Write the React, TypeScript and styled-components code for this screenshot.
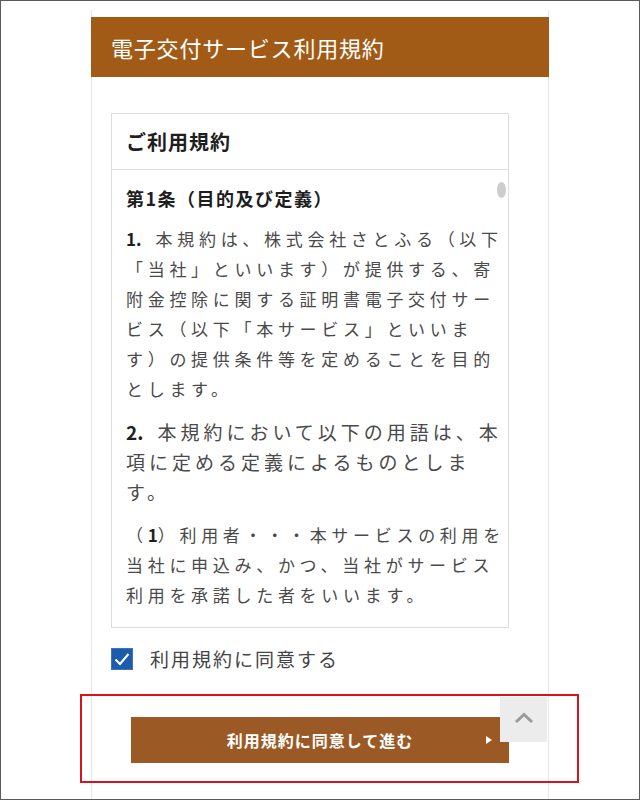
import React, { useState } from 'react'
import styled, { createGlobalStyle } from 'styled-components'

const GlobalStyle = createGlobalStyle`
    * { box-sizing: border-box; }
    body {
        margin: 0;
        background: #ffffff;
        font-family: "Noto Sans CJK JP", "Noto Sans", sans-serif;
    }
`

const Frame = styled.div`
    position: relative;
    width: 640px;
    height: 800px;
    border: 1px solid #5a5a5a;
    background: #ffffff;
    overflow: hidden;
    display: flex;
    flex-direction: column;
`

const Panel = styled.section`
    width: 458px;
    margin: 9px auto 0;
    padding-top: 7px;
    flex: 1;
    border-left: 1px solid #e6e6e6;
    border-right: 1px solid #e6e6e6;
`

const Header = styled.h1`
    margin: 0 -1px;
    height: 60px;
    display: flex;
    align-items: center;
    padding-left: 20px;
    background: #a15b17;
    color: #ffffff;
    font-size: 22px;
    font-weight: 400;
    letter-spacing: 0.8px;
`

const Body = styled.div`
    padding: 36px 0 0 19px;
`

const TermsBox = styled.div`
    width: 398px;
    border: 1px solid #dcdcdc;
    background: #ffffff;
`

const TermsTitle = styled.h2`
    margin: 0;
    height: 56px;
    display: flex;
    align-items: center;
    padding-left: 14px;
    border-bottom: 1px solid #dcdcdc;
    font-size: 20px;
    font-weight: 700;
    letter-spacing: 1px;
    color: #1e1e1e;
`

const ScrollArea = styled.div`
    position: relative;
    height: 457px;
    overflow: hidden;
    padding: 13px 0 0 14px;
`

const Content = styled.div`
    width: 382px;
`

const Thumb = styled.div`
    position: absolute;
    top: 12px;
    right: 2px;
    width: 9px;
    height: 16px;
    border-radius: 50%;
    background: #cdcdcd;
`

const Article = styled.h3`
    margin: 0 0 11px;
    font-size: 18px;
    font-weight: 700;
    line-height: 30px;
    letter-spacing: 1.5px;
    color: #1e1e1e;
`

interface ParaProps {
    readonly large?: boolean;
}

const Para = styled.p<ParaProps>`
    margin: 0 0 13px;
    font-size: ${props => props.large ? '19px' : '17px'};
    letter-spacing: ${props => props.large ? '4px' : '4.7px'};
    line-height: 30px;
    color: #4a4a4a;
    line-break: strict;
`

const Num = styled.b`
    margin-right: 14px;
    letter-spacing: 0;
    font-weight: 700;
    color: #1e1e1e;
`

const InlineNum = styled.b`
    letter-spacing: 0;
    font-weight: 700;
    color: #1e1e1e;
`

const AgreeRow = styled.label`
    display: flex;
    align-items: center;
    gap: 17px;
    margin-top: 17px;
    cursor: pointer;
`

const CheckBox = styled.span<{ checked: boolean }>`
    width: 22px;
    height: 22px;
    display: grid;
    place-items: center;
    background: ${props => props.checked ? '#1d5cad' : '#ffffff'};
    border: 1px solid ${props => props.checked ? '#3d74bb' : '#999999'};
`

const AgreeText = styled.span`
    font-size: 19px;
    letter-spacing: 2px;
    color: #444444;
`

const ButtonArea = styled.div`
    display: flex;
    justify-content: center;
    margin: 45px 0 0 -19px;
`

const NextButton = styled.button`
    position: relative;
    width: 378px;
    height: 46px;
    border: none;
    background: #9b5a25;
    color: #ffffff;
    font-family: inherit;
    font-size: 16px;
    font-weight: 700;
    letter-spacing: 1px;
    cursor: pointer;

    &::after {
        content: "";
        position: absolute;
        right: 17px;
        top: 50%;
        margin-top: -4px;
        border-left: 6px solid #ffffff;
        border-top: 4px solid transparent;
        border-bottom: 4px solid transparent;
    }
`

const PageTop = styled.button`
    position: absolute;
    left: 499px;
    top: 696px;
    width: 47px;
    height: 45px;
    border: none;
    background: #ececec;
    display: grid;
    place-items: center;
    padding: 0 0 4px;
`

const Highlight = styled.div`
    position: absolute;
    left: 79px;
    top: 693px;
    width: 499px;
    height: 89px;
    border: 2px solid #d8141b;
    pointer-events: none;
`

const App = () => {
    const [agreed, setAgreed] = useState(true)

    return (
        <>
            <GlobalStyle />
            <Frame>
                <Panel>
                    <Header>電子交付サービス利用規約</Header>
                    <Body>
                        <TermsBox>
                            <TermsTitle>ご利用規約</TermsTitle>
                            <ScrollArea>
                                <Content>
                                    <Article>第1条（目的及び定義）</Article>
                                    <Para>
                                        <Num>1.</Num>本規約は、株式会社さとふる（以下「当社」といいます）が提供する、寄附金控除に関する証明書電子交付サービス（以下「本サービス」といいます）の提供条件等を定めることを目的とします。
                                    </Para>
                                    <Para large>
                                        <Num>2.</Num>本規約において以下の用語は、本項に定める定義によるものとします。
                                    </Para>
                                    <Para>
                                        （<InlineNum>1</InlineNum>）利用者・・・本サービスの利用を当社に申込み、かつ、当社がサービス利用を承諾した者をいいます。
                                    </Para>
                                </Content>
                                <Thumb />
                            </ScrollArea>
                        </TermsBox>
                        <AgreeRow onClick={() => setAgreed(a => !a)}>
                            <CheckBox checked={agreed}>
                                {agreed && (
                                    <svg width="18" height="18" viewBox="0 0 18 18">
                                        <path d="M2.5 9.5 L7 14 L15.5 4" fill="none" stroke="#ffffff" strokeWidth="2" />
                                    </svg>
                                )}
                            </CheckBox>
                            <AgreeText>利用規約に同意する</AgreeText>
                        </AgreeRow>
                        <ButtonArea>
                            <NextButton>利用規約に同意して進む</NextButton>
                        </ButtonArea>
                    </Body>
                </Panel>
                <Highlight />
                <PageTop aria-label="ページトップへ">
                    <svg width="20" height="12" viewBox="0 0 20 12">
                        <path d="M2 10 L10 2.5 L18 10" fill="none" stroke="#9a9a9a" strokeWidth="3" />
                    </svg>
                </PageTop>
            </Frame>
        </>
    )
}

export default App
